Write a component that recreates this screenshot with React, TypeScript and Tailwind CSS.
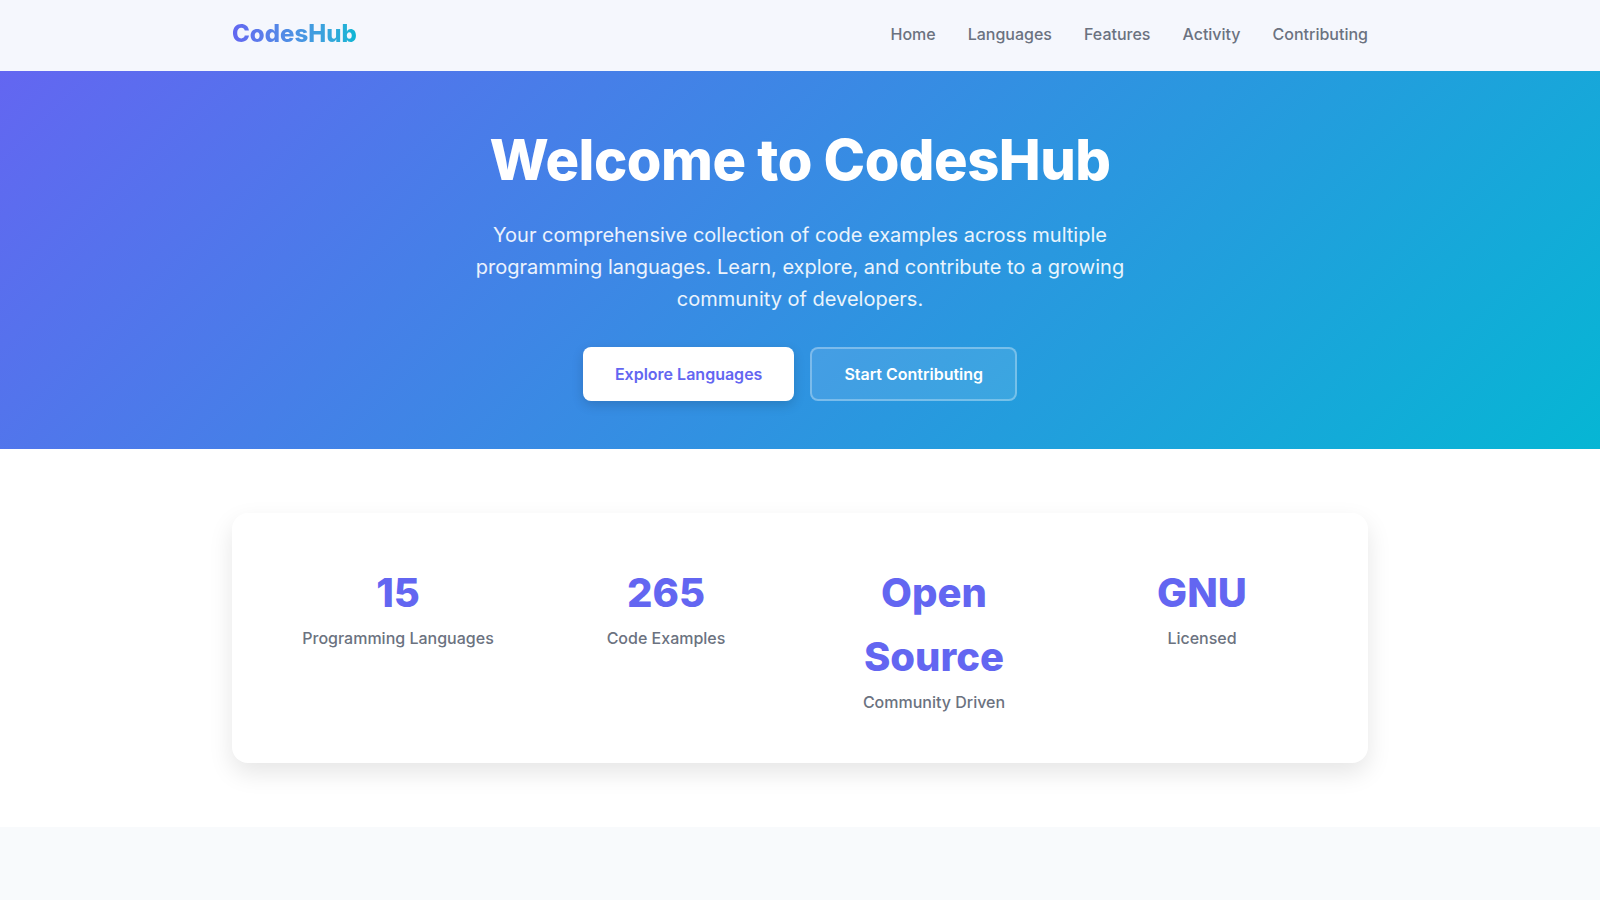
import React from 'react';

const navLinks = ['Home', 'Languages', 'Features', 'Activity', 'Contributing'];

const stats = [
  { value: '15', label: 'Programming Languages' },
  { value: '265', label: 'Code Examples' },
  { value: 'Open Source', label: 'Community Driven' },
  { value: 'GNU', label: 'Licensed' },
];

export default function App() {
  return (
    <div className="min-h-screen bg-white font-['Inter','Noto_Sans',sans-serif] text-[#1f2937]">
      <header className="h-[71px] bg-[#f5f7fd] shadow-[0_1px_3px_rgba(0,0,0,0.04)]">
        <div className="mx-auto flex h-full max-w-[1200px] items-center justify-between px-8 pb-[3px]">
          <span className="bg-gradient-to-r from-[#6366f1] to-[#06b6d4] bg-clip-text text-2xl font-extrabold text-transparent">
            CodesHub
          </span>
          <nav className="flex items-center gap-8">
            {navLinks.map((link) => (
              <a key={link} href="#" className="text-base font-medium text-[#6b7280]">
                {link}
              </a>
            ))}
          </nav>
        </div>
      </header>

      <section className="bg-[linear-gradient(135deg,#6366f1_0%,#06b6d4_100%)] pt-[56px] pb-[48px] text-center text-white">
        <h1 className="text-[56px] leading-[1.2] font-extrabold tracking-[-0.5px]">Welcome to CodesHub</h1>
        <p className="mx-auto mt-[25px] max-w-[660px] text-xl leading-8 text-white/90">
          Your comprehensive collection of code examples across multiple programming languages. Learn, explore, and
          contribute to a growing community of developers.
        </p>
        <div className="mt-8 flex justify-center gap-4">
          <a
            href="#"
            className="rounded-lg bg-white px-8 py-[14px] text-base leading-[26px] font-semibold text-[#6366f1] shadow-[0_4px_12px_rgba(0,0,0,0.15)]"
          >
            Explore Languages
          </a>
          <a
            href="#"
            className="rounded-lg border-2 border-white/30 bg-white/10 px-8 py-3 text-base leading-[26px] font-semibold text-white"
          >
            Start Contributing
          </a>
        </div>
      </section>

      <section className="py-16">
        <div className="mx-auto max-w-[1200px] px-8">
          <div className="grid grid-cols-4 gap-8 rounded-2xl bg-white p-12 shadow-[0_10px_25px_rgba(0,0,0,0.1)]">
            {stats.map((s) => (
              <div key={s.label} className="text-center">
                <div className="text-[40px] leading-[64px] font-extrabold text-[#6366f1]">{s.value}</div>
                <div className="text-base leading-[26px] font-medium text-[#6b7280]">{s.label}</div>
              </div>
            ))}
          </div>
        </div>
      </section>

      <section className="h-[200px] bg-[#f8fafc]" />
    </div>
  );
}
